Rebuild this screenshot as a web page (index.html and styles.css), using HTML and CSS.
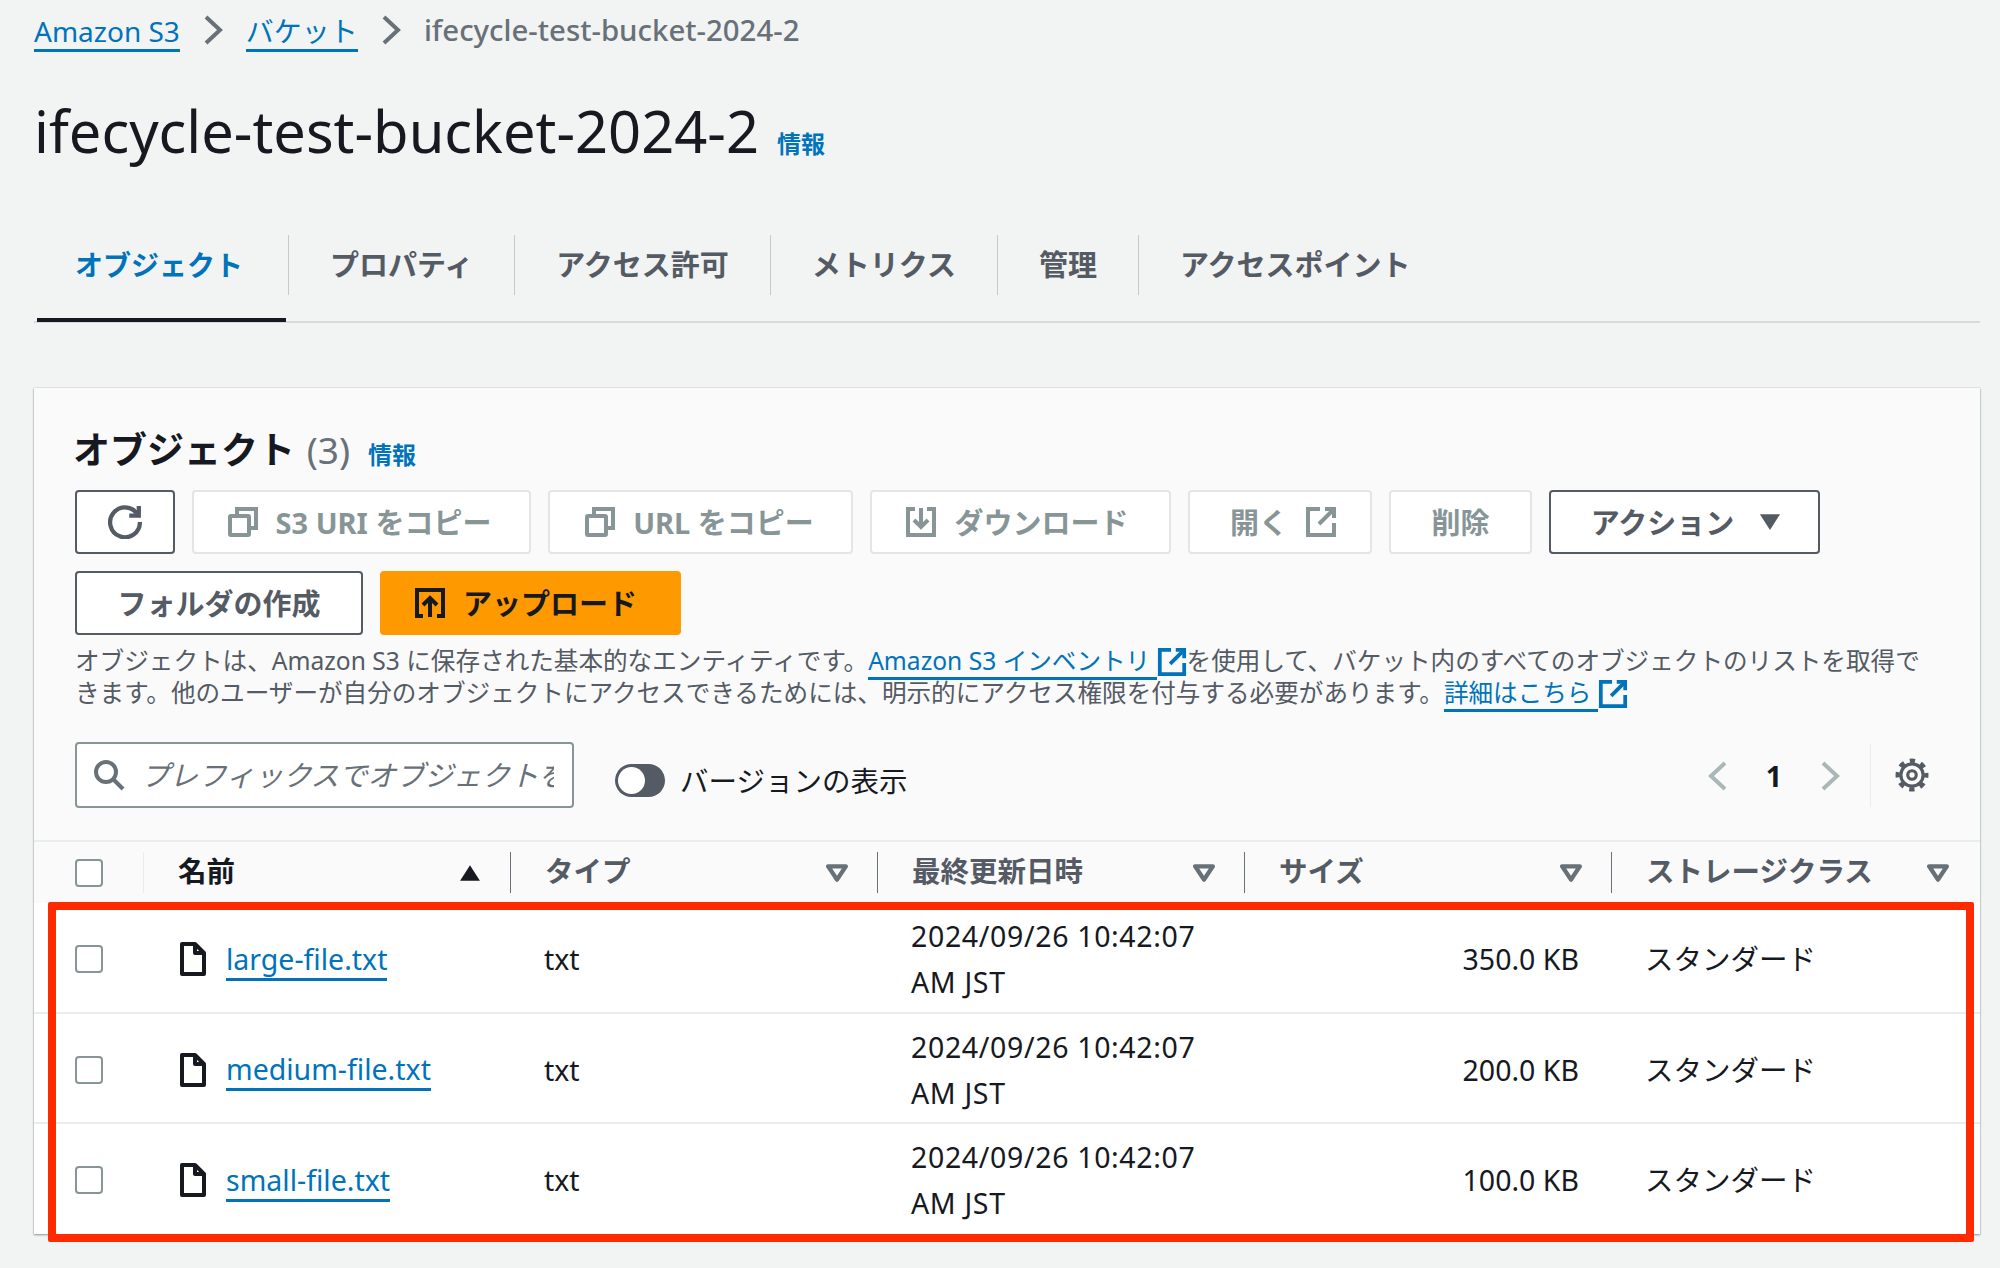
FILE: index.html
```html
<!DOCTYPE html>
<html lang="ja">
<head>
  <meta charset="UTF-8" />
  <title>ifecycle-test-bucket-2024-2</title>
  <link rel="stylesheet" href="styles.css">
</head>
<body>

<!-- Breadcrumb -->
<nav class="crumbs">
  <a class="link">Amazon S3</a>
  <svg class="crumb-sep" viewBox="0 0 20 30"><path d="M3 2l14 13L3 28"/></svg>
  <a class="link">バケット</a>
  <svg class="crumb-sep" viewBox="0 0 20 30"><path d="M3 2l14 13L3 28"/></svg>
  <span class="crumb-current">ifecycle-test-bucket-2024-2</span>
</nav>

<div class="title-row">
  <h1>ifecycle-test-bucket-2024-2</h1>
  <span class="info">情報</span>
</div>

<!-- Tabs -->
<div class="tabs">
  <div class="tab tab-active">オブジェクト</div>
  <div class="tab">プロパティ</div>
  <div class="tab">アクセス許可</div>
  <div class="tab">メトリクス</div>
  <div class="tab">管理</div>
  <div class="tab">アクセスポイント</div>
</div>

<!-- Objects card -->
<section class="card">
  <div class="card-head">
    <h2>オブジェクト <span class="count">(3)</span></h2>
    <span class="info">情報</span>
  </div>

  <div class="actions">
    <button class="btn btn-refresh">
      <svg class="icon icon-refresh" viewBox="0 0 32 32"><path d="M28.500 10A14 14 0 1 0 30 16"/><path d="M29 1v9h-9"/></svg>
    </button>
    <button class="btn btn-off btn-s3">
      <svg class="icon" viewBox="0 0 32 32"><rect x="3" y="10" width="19" height="19" rx="1"/><path d="M10 9V3h19v19h-6"/></svg>
      <span>S3 URI をコピー</span>
    </button>
    <button class="btn btn-off btn-url">
      <svg class="icon" viewBox="0 0 32 32"><rect x="3" y="10" width="19" height="19" rx="1"/><path d="M10 9V3h19v19h-6"/></svg>
      <span>URL をコピー</span>
    </button>
    <button class="btn btn-off btn-down">
      <svg class="icon" viewBox="0 0 32 32"><path d="M10 3H3v26h26V3h-7"/><path d="M16 2v18"/><path d="M9 14l7 7 7-7"/></svg>
      <span>ダウンロード</span>
    </button>
    <button class="btn btn-off btn-open">
      <span>開く</span>
      <svg class="icon" viewBox="0 0 32 32"><path d="M15 3H3v26h26V17"/><path d="M20 3h9v9"/><path d="M29 3L14 18"/></svg>
    </button>
    <button class="btn btn-off btn-del"><span>削除</span></button>
    <button class="btn btn-action">
      <span>アクション</span>
      <svg class="caret" viewBox="0 0 20 16"><path d="M1 1h18L10 15z"/></svg>
    </button>
  </div>

  <div class="actions actions-2">
    <button class="btn btn-folder"><span>フォルダの作成</span></button>
    <button class="btn btn-upload">
      <svg class="icon" viewBox="0 0 32 32"><path d="M9 29H3V3h26v26h-6"/><path d="M16 30V12"/><path d="M9 18l7-7 7 7"/></svg>
      <span>アップロード</span>
    </button>
  </div>

  <p class="desc">オブジェクトは、Amazon S3 に保存された基本的なエンティティです。<a class="link">Amazon S3 インベントリ </a><svg class="ext" viewBox="0 0 32 32"><path d="M15 3H3v26h26V17"/><path d="M20 3h9v9"/><path d="M29 3L14 18"/></svg>を使用して、バケット内のすべてのオブジェクトのリストを取得できます。他のユーザーが自分のオブジェクトにアクセスできるためには、明示的にアクセス権限を付与する必要があります。<a class="link">詳細はこちら </a><svg class="ext" viewBox="0 0 32 32"><path d="M15 3H3v26h26V17"/><path d="M20 3h9v9"/><path d="M29 3L14 18"/></svg></p>

  <div class="filter-row">
    <div class="search">
      <svg class="icon search-icon" viewBox="0 0 32 32"><circle cx="13" cy="13" r="10"/><path d="M20 20l10 10"/></svg>
      <span class="placeholder">プレフィックスでオブジェクトを検索</span>
    </div>
    <div class="toggle"><span class="knob"></span></div>
    <span class="toggle-label">バージョンの表示</span>
    <div class="pager">
      <svg class="pager-arrow" viewBox="0 0 20 30"><path d="M17 2L3 15l14 13"/></svg>
      <span class="page-num">1</span>
      <svg class="pager-arrow" viewBox="0 0 20 30"><path d="M3 2l14 13L3 28"/></svg>
    </div>
    <div class="settings">
      <svg class="gear" viewBox="0 0 32 32">
        <circle class="gear-hub" cx="16" cy="16" r="4"/>
        <circle class="gear-ring" cx="16" cy="16" r="10.500"/>
        <circle class="gear-teeth" cx="16" cy="16" r="13.500"/>
      </svg>
    </div>
  </div>

  <table class="objects">
    <colgroup>
      <col class="col-check"><col class="col-data"><col class="col-data"><col class="col-data"><col class="col-data"><col>
    </colgroup>
    <thead>
      <tr>
        <th class="th-check"><span class="check"></span></th>
        <th class="th-name"><div class="th-in"><span class="th-label">名前</span><svg class="sort sort-on" viewBox="0 0 20 16"><path d="M10 1l9 14H1z"/></svg></div></th>
        <th><div class="th-in"><span class="th-label">タイプ</span><svg class="sort" viewBox="0 0 20 16"><path d="M2 2h16l-8 12z"/></svg></div></th>
        <th><div class="th-in"><span class="th-label">最終更新日時</span><svg class="sort" viewBox="0 0 20 16"><path d="M2 2h16l-8 12z"/></svg></div></th>
        <th><div class="th-in"><span class="th-label">サイズ</span><svg class="sort" viewBox="0 0 20 16"><path d="M2 2h16l-8 12z"/></svg></div></th>
        <th><div class="th-in"><span class="th-label">ストレージクラス</span><svg class="sort" viewBox="0 0 20 16"><path d="M2 2h16l-8 12z"/></svg></div></th>
      </tr>
    </thead>
    <tbody>
      <tr>
        <td class="td-check"><span class="check"></span></td>
        <td><div class="name-cell"><svg class="file" viewBox="0 0 26 34"><path d="M2 2h13l9 9v21H2z"/><path d="M15 2v9h9"/></svg><a class="link">large-file.txt</a></div></td>
        <td>txt</td>
        <td class="td-date">2024/09/26 10:42:07<br>AM JST</td>
        <td class="td-size">350.0 KB</td>
        <td>スタンダード</td>
      </tr>
      <tr>
        <td class="td-check"><span class="check"></span></td>
        <td><div class="name-cell"><svg class="file" viewBox="0 0 26 34"><path d="M2 2h13l9 9v21H2z"/><path d="M15 2v9h9"/></svg><a class="link">medium-file.txt</a></div></td>
        <td>txt</td>
        <td class="td-date">2024/09/26 10:42:07<br>AM JST</td>
        <td class="td-size">200.0 KB</td>
        <td>スタンダード</td>
      </tr>
      <tr>
        <td class="td-check"><span class="check"></span></td>
        <td><div class="name-cell"><svg class="file" viewBox="0 0 26 34"><path d="M2 2h13l9 9v21H2z"/><path d="M15 2v9h9"/></svg><a class="link">small-file.txt</a></div></td>
        <td>txt</td>
        <td class="td-date">2024/09/26 10:42:07<br>AM JST</td>
        <td class="td-size">100.0 KB</td>
        <td>スタンダード</td>
      </tr>
    </tbody>
  </table>

  <!-- Red annotation box drawn over the rows -->
  <div class="highlight"></div>
</section>

</body>
</html>
```

FILE: styles.css
```css
* {
  box-sizing: border-box;
}

body {
  margin: 0;
  padding: 0 20px 0 34px;
  height: 1268px;
  overflow: hidden;
  background: #f2f3f3;
  color: #16191f;
  font-family: "Noto Sans", "Noto Sans CJK JP", sans-serif;
  font-size: 28.500px;
}

.link {
  color: #0073bb;
  border-bottom: 3px solid #0073bb;
}

/* Breadcrumb */
.crumbs {
  display: flex;
  align-items: center;
  height: 62px;
  padding-bottom: 2px;
}

.crumbs .link {
  font-size: 28px;
  line-height: 36px;
  margin-top: 4px;
}

.crumb-sep {
  width: 20px;
  height: 30px;
  margin: 0 23px 0 23px;
  fill: none;
  stroke: #687078;
  stroke-width: 4;
}

.crumb-current {
  color: #687078;
  font-size: 29.400px;
  font-weight: 500;
}

.title-row {
  display: flex;
  align-items: baseline;
  margin-top: 27px;
  height: 85px;
}

h1 {
  margin: 0;
  font-size: 57.800px;
  font-weight: 400;
  line-height: 84px;
}

.info {
  color: #0073bb;
  font-size: 24px;
  font-weight: 700;
  margin-left: 18px;
}

/* Tabs */
.tabs {
  display: flex;
  align-items: flex-start;
  margin-top: 61px;
  height: 88px;
  border-bottom: 2px solid #d5dbdb;
  position: relative;
}

.tab {
  height: 60px;
  padding: 0 41px;
  font-size: 29px;
  line-height: 60px;
  font-weight: 700;
  color: #545b64;
  border-right: 1px solid #c4cbcb;
  white-space: nowrap;
}

.tab:last-child {
  border-right: none;
}

.tab-active {
  color: #0073bb;
  font-size: 28px;
  padding: 0 45px 0 41px;
}

.tab-active::after {
  content: "";
  position: absolute;
  left: 3px;
  bottom: -1px;
  width: 249px;
  height: 4px;
  background: #16191f;
}

/* Card */
.card {
  position: relative;
  margin-top: 65px;
  height: 846px;
  background: #fafafa;
  box-shadow: 0 1px 2px rgba(0, 28, 36, 0.4), 0 0 1px rgba(0, 28, 36, 0.3);
}

.card-head {
  display: flex;
  align-items: baseline;
  padding: 38px 0 0 39px;
  height: 102px;
}

h2 {
  margin: 0;
  font-size: 37px;
  font-weight: 700;
  line-height: 48px;
}

.count {
  margin-left: 2px;
  color: #687078;
  font-weight: 400;
}

.actions {
  display: flex;
  gap: 17px;
  padding-left: 41px;
}

.actions-2 {
  margin-top: 17px;
}

.btn {
  display: flex;
  align-items: center;
  justify-content: center;
  gap: 17px;
  height: 64px;
  padding: 0;
  background: #fff;
  border: 2px solid #545b64;
  border-radius: 4px;
  color: #545b64;
  font: inherit;
  font-size: 29px;
  font-weight: 700;
  white-space: nowrap;
}

.btn span {
  margin-bottom: 2px;
}

.btn-off {
  border-color: #e3e6e6;
  color: #879596;
}

.btn-refresh { width: 100px; }
.btn-s3 { width: 339px; padding-right: 5px; }
.btn-url { width: 305px; padding-right: 3px; }
.btn-down { width: 301px; padding-right: 7px; }
.btn-open { width: 184px; padding-left: 7px; }
.btn-del { width: 143px; }
.btn-action { width: 271px; gap: 24px; padding-left: 4px; }
.btn-folder { width: 288px; }

.btn-upload {
  width: 301px;
  padding-right: 10px;
  background: #ff9900;
  border-color: #ff9900;
  color: #16191f;
}

.icon {
  width: 32px;
  height: 32px;
  flex: none;
  fill: none;
  stroke: currentColor;
  stroke-width: 4;
}

.icon-refresh {
  width: 34px;
  height: 34px;
}

.caret {
  width: 24px;
  height: 18px;
  fill: #545b64;
}

.desc {
  margin: 10px 0 0;
  padding: 0 41px;
  color: #545b64;
  font-size: 24.600px;
  line-height: 32px;
}

.ext {
  width: 30px;
  height: 30px;
  vertical-align: -7px;
  fill: none;
  stroke: #0073bb;
  stroke-width: 4;
}

/* Filter row */
.filter-row {
  display: flex;
  align-items: center;
  margin-top: 33px;
  padding-left: 41px;
  height: 66px;
}

.search {
  display: flex;
  align-items: center;
  width: 499px;
  height: 66px;
  padding: 0 18px 0 16px;
  background: #fff;
  border: 2px solid #879596;
  border-radius: 4px;
  overflow: hidden;
}

.search-icon {
  color: #687078;
  margin-right: 16px;
}

.placeholder {
  padding-bottom: 4px;
  color: #687078;
  font-style: italic;
  white-space: nowrap;
  overflow: hidden;
}

.toggle {
  position: relative;
  width: 50px;
  height: 33px;
  margin: 10px 15px 0 41px;
  border-radius: 17px;
  background: #545b64;
  flex: none;
}

.knob {
  position: absolute;
  left: 3px;
  top: 3px;
  width: 27px;
  height: 27px;
  border-radius: 50%;
  background: #fff;
}

.toggle-label {
  margin-top: 8px;
}

.pager {
  display: flex;
  align-items: center;
  margin-left: auto;
  gap: 38px;
  margin-top: 2px;
}

.pager-arrow {
  width: 20px;
  height: 30px;
  fill: none;
  stroke: #aab7b8;
  stroke-width: 4;
}

.page-num {
  font-weight: 700;
}

.settings {
  display: flex;
  align-items: center;
  justify-content: center;
  height: 63px;
  margin-left: 30px;
  padding: 0 51px 0 24px;
  border-left: 1px solid #eaeded;
}

.gear {
  width: 34px;
  height: 34px;
  fill: none;
  stroke: #545b64;
  stroke-width: 3;
}

.gear-teeth {
  stroke-width: 4;
  stroke-dasharray: 5 5.600;
  stroke-dashoffset: 2.500;
}

/* Table */
.objects {
  width: 100%;
  margin-top: 32px;
  border-collapse: collapse;
  table-layout: fixed;
}

.col-check { width: 109px; }
.col-data { width: 367px; }

th {
  height: 62px;
  padding: 0;
  background: #fafafa;
  border-top: 2px solid #eaeded;
  color: #545b64;
  font-weight: 700;
  text-align: left;
}

.th-name {
  color: #16191f;
}

.th-in {
  display: flex;
  align-items: center;
  justify-content: space-between;
  height: 41px;
  padding: 0 29px 0 34px;
  border-left: 1px solid #687078;
}

.th-label {
  margin-bottom: 6px;
}

.th-name .th-in {
  border-left-color: #eaeded;
}

th:last-child .th-in {
  padding-right: 31px;
}

.sort {
  width: 22px;
  height: 18px;
  fill: #fafafa;
  stroke: #687078;
  stroke-width: 4;
  stroke-linejoin: round;
}

.sort-on {
  fill: #16191f;
  stroke: none;
}

td {
  height: 110px;
  padding: 3px 0 0 34px;
  background: #fff;
  border-bottom: 2px solid #eaeded;
  line-height: 46px;
}

tbody tr:last-child td {
  border-bottom: none;
}

.th-check,
.td-check {
  padding-left: 41px;
}

.check {
  display: block;
  width: 28px;
  height: 28px;
  background: #fff;
  border: 2px solid #879596;
  border-radius: 4px;
}

.name-cell {
  display: flex;
  align-items: center;
  gap: 20px;
  padding-left: 3px;
}

.name-cell .link {
  line-height: 38px;
  margin-top: 2px;
}

.file {
  width: 26px;
  height: 34px;
  fill: none;
  stroke: #16191f;
  stroke-width: 4;
  stroke-linejoin: round;
}

.td-date {
  letter-spacing: 0.650px;
}

.td-size {
  padding: 3px 32px 0 0;
  text-align: right;
}

.highlight {
  position: absolute;
  left: 14px;
  top: 514px;
  width: 1926px;
  height: 340px;
  border: 8px solid #ff2a00;
  border-radius: 2px;
  pointer-events: none;
}
```
